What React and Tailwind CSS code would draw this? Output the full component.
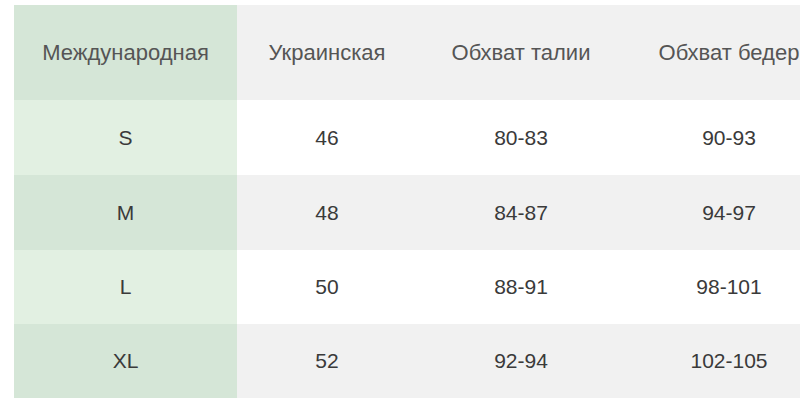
const headers = ['Международная', 'Украинская', 'Обхват талии', 'Обхват бедер']

const rows = [
  ['S', '46', '80-83', '90-93'],
  ['M', '48', '84-87', '94-97'],
  ['L', '50', '88-91', '98-101'],
  ['XL', '52', '92-94', '102-105'],
]

export default function App() {
  return (
    <div className="w-[800px] h-[416px] bg-white overflow-hidden pt-[5px] pl-[14px]" style={{ fontFamily: '"Liberation Sans", Arial, sans-serif' }}>
      <table className="border-collapse table-fixed w-[880px] text-[21px]">
        <colgroup>
          <col className="w-[223px]" />
          <col className="w-[180px]" />
          <col className="w-[208px]" />
          <col className="w-[208px]" />
          <col />
        </colgroup>
        <thead>
          <tr className="h-[95px] bg-[#f1f1f1]">
            {headers.map((h, i) => (
              <th
                key={h}
                className={`font-normal text-center whitespace-nowrap text-[22px] text-[#555] ${i === 0 ? 'bg-[#d5e6d7]' : ''}`}
              >
                {h}
              </th>
            ))}
            <th />
          </tr>
        </thead>
        <tbody>
          {rows.map((r, i) => {
            const odd = i % 2 === 1
            return (
              <tr key={r[0]} className={`${i < 2 ? 'h-[75px]' : 'h-[74px]'} ${odd ? 'bg-[#f1f1f1]' : 'bg-white'}`}>
                {r.map((c, j) => (
                  <td
                    key={j}
                    className={`text-center text-[#3a3a3a] ${j === 0 ? (odd ? 'bg-[#d5e6d7]' : 'bg-[#e2f0e2]') : ''}`}
                  >
                    {c}
                  </td>
                ))}
                <td />
              </tr>
            )
          })}
        </tbody>
      </table>
    </div>
  )
}
